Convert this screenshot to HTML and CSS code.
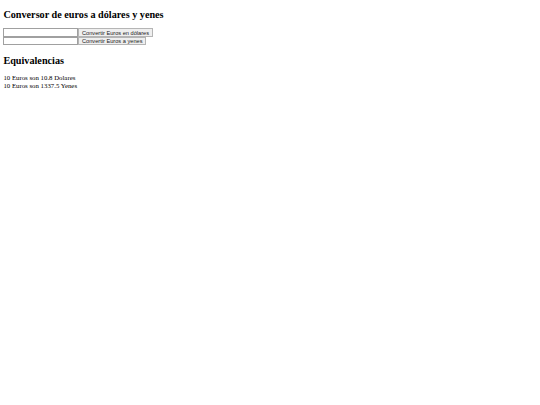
FILE: index.html
```html
<!DOCTYPE html>
<html>
<head>
<meta charset="utf-8">
<link rel="stylesheet" href="styles.css">
</head>
<body>
<h2 class="title title-top">Conversor de euros a dólares y yenes</h2>
<form class="form">
<div class="row"><input class="field" type="text"><button class="btn" type="button">Convertir Euros en dólares</button></div>
<div class="row"><input class="field" type="text"><button class="btn" type="button">Convertir Euros a yenes</button></div>
</form>
<h2 class="title title-sub">Equivalencias</h2>
<p class="result">10 Euros son 10.8 Dolares<br>10 Euros son 1337.5 Yenes</p>
</body>
</html>
```
FILE: styles.css
```css
body {
  margin: 3.4px;
  font-family: "Liberation Serif", serif;
  font-size: 6.8px;
  color: #000;
  background: #fff;
}
.title {
  font-size: 10.2px;
  font-weight: bold;
  margin: 8.45px 0;
}
.title-top {
  margin-top: 5.4px;
}
.title-sub {
  margin-top: 9.45px;
}
.form {
  margin: 0;
}
.row {
  display: flex;
  align-items: center;
  height: 8.6px;
}
.field {
  width: 74.6px;
  height: 8.6px;
  box-sizing: border-box;
  border: 1px solid #a0a0a0;
  padding: 0;
  margin: 0;
  background: #fff;
}
.btn {
  height: 8.2px;
  box-sizing: border-box;
  font-family: "Liberation Sans", sans-serif;
  font-size: 5.65px;
  line-height: 6px;
  padding: 0 2.6px;
  margin: 0 0 0 0.4px;
  border: 1px solid #b5b5b5;
  background: #efefef;
  color: #222;
}
.result {
  margin: 8.45px 0;
  line-height: 7.8px;
}
```
